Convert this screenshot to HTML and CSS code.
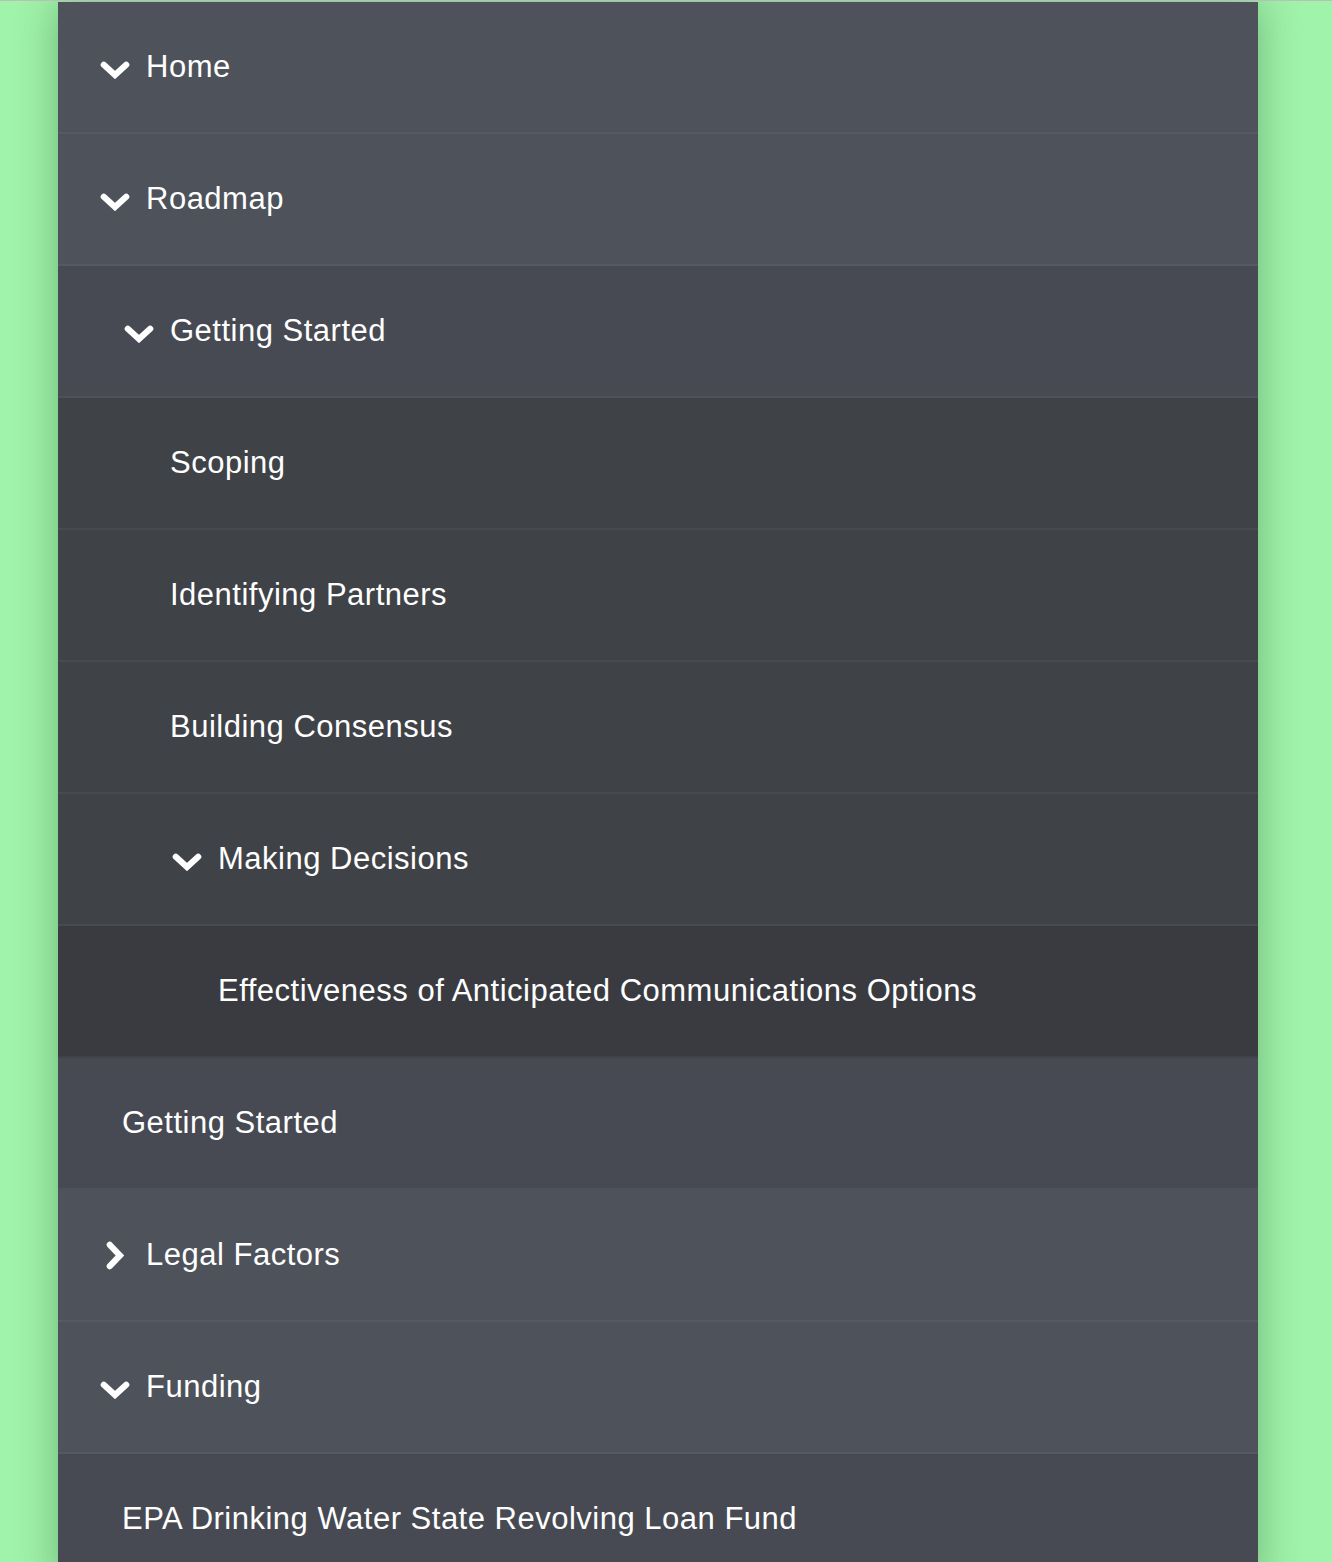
FILE: index.html
```html
<!DOCTYPE html>
<html>
<head>
<meta charset="utf-8">
<link rel="stylesheet" href="styles.css">
</head>
<body>
<nav class="menu">
  <div class="row lvl0 ic0"><svg class="chev-down" viewBox="0 0 30 18"><polyline points="3.8,3.8 15,14 26.2,3.8"/></svg><span>Home</span></div>
  <div class="row lvl0 ic0"><svg class="chev-down" viewBox="0 0 30 18"><polyline points="3.8,3.8 15,14 26.2,3.8"/></svg><span>Roadmap</span></div>
  <div class="row lvl1 ic1"><svg class="chev-down" viewBox="0 0 30 18"><polyline points="3.8,3.8 15,14 26.2,3.8"/></svg><span>Getting Started</span></div>
  <div class="row lvl2 leaf2"><span>Scoping</span></div>
  <div class="row lvl2 leaf2"><span>Identifying Partners</span></div>
  <div class="row lvl2 leaf2"><span>Building Consensus</span></div>
  <div class="row lvl2 ic2"><svg class="chev-down" viewBox="0 0 30 18"><polyline points="3.8,3.8 15,14 26.2,3.8"/></svg><span>Making Decisions</span></div>
  <div class="row lvl3 leaf3"><span>Effectiveness of Anticipated Communications Options</span></div>
  <div class="row lvl1 leaf1"><span>Getting Started</span></div>
  <div class="row lvl0 ic0r"><svg class="chev-right" viewBox="0 0 18 29"><polyline points="3.8,3.8 14,14.5 3.8,25.2"/></svg><span>Legal Factors</span></div>
  <div class="row lvl0 ic0"><svg class="chev-down" viewBox="0 0 30 18"><polyline points="3.8,3.8 15,14 26.2,3.8"/></svg><span>Funding</span></div>
  <div class="row lvl1 leaf1"><span>EPA Drinking Water State Revolving Loan Fund</span></div>
</nav>
</body>
</html>
```
FILE: styles.css
```css
html {
  background: #a0f3ab;
  border-top: 1px solid #bdbdbd;
}
body {
  margin: 0;
  font-family: "Liberation Sans", Arial, sans-serif;
}
.menu {
  width: 1200px;
  margin: 1px 0 0 58px;
  box-shadow: 0 0 40px rgba(0, 50, 10, 0.32);
  background: #4e525a;
}
.row {
  height: 130px;
  border-bottom: 2px solid rgba(255, 255, 255, 0.045);
  display: flex;
  align-items: center;
  color: #fff;
  font-size: 31px;
  letter-spacing: 0.5px;
  box-sizing: content-box;
}
.lvl0 { background: #4e525a; }
.lvl1 { background: #474a52; }
.lvl2 { background: #3f4247; }
.lvl3 { background: #393b40; }

.chev-down,
.chev-right {
  fill: none;
  stroke: #fff;
  stroke-width: 6.2;
  stroke-linecap: round;
  stroke-linejoin: miter;
  flex: none;
}
.chev-down {
  width: 30px;
  height: 18px;
  margin: 5px 16px 0 0;
}
.chev-right {
  width: 18px;
  height: 29px;
  margin-right: 22px;
}
.ic0 { padding-left: 42px; }
.ic0r { padding-left: 48px; }
.ic1 { padding-left: 66px; }
.ic2 { padding-left: 114px; }
.leaf1 { padding-left: 64px; }
.leaf2 { padding-left: 112px; }
.leaf3 { padding-left: 160px; }
```
